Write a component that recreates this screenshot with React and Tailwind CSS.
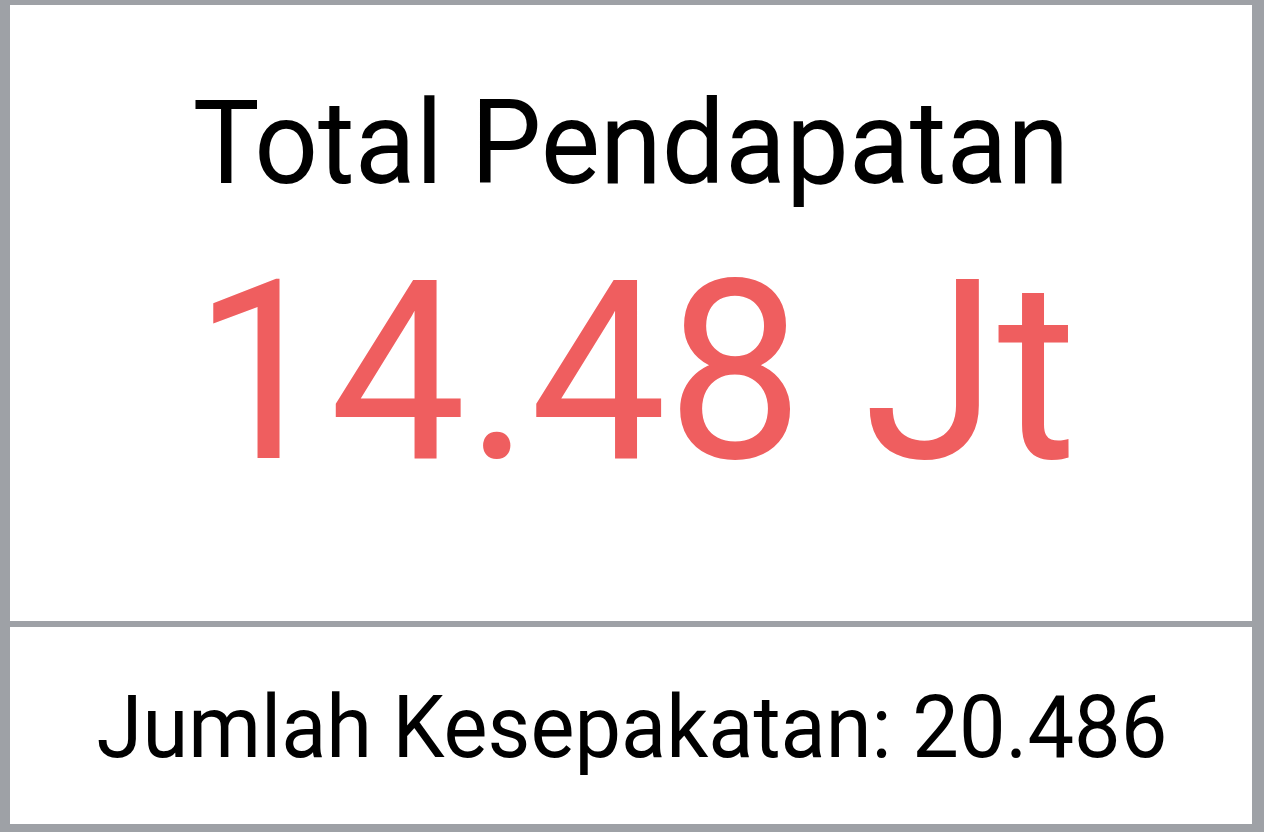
export default function App() {
  return (
    <div
      className="w-[1264px] h-[832px] bg-[#9ea1a6] pl-[10px] pr-[12px] pt-[5px] pb-[8px] flex flex-col"
      style={{ fontFamily: "Roboto, 'Noto Sans', sans-serif" }}
    >
      <div className="flex-1 bg-white flex flex-col">
        <div className="h-[616px] flex flex-col items-center">
          <div className="mt-[84px] text-[112px] leading-none text-black scale-y-[1.04] origin-[50%_84%]">
            Total Pendapatan
          </div>
          <div className="mt-[53px] ml-[8px] text-[243px] leading-none text-[#ef5e5f] scale-y-[1.03] origin-[50%_84%]">
            14.48 Jt
          </div>
        </div>
        <div className="h-[6px] bg-[#9ea1a6]" />
        <div className="flex-1 flex justify-center pt-[62px]">
          <div className="ml-[2px] text-[83px] leading-none text-black scale-y-[1.05] origin-[50%_84%]">
            Jumlah Kesepakatan: 20.486
          </div>
        </div>
      </div>
    </div>
  );
}
